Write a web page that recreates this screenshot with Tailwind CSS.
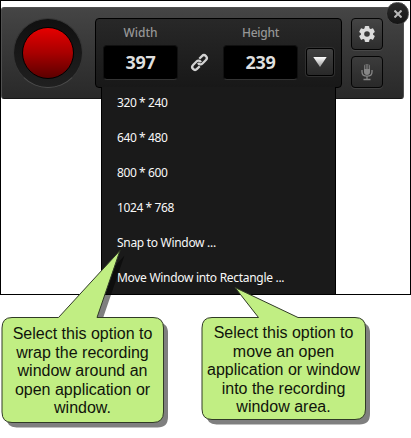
<!DOCTYPE html>
<html lang="en">
<head>
<meta charset="utf-8">
<title>Recorder</title>
<script src="https://cdn.jsdelivr.net/npm/@tailwindcss/browser@4"></script>
</head>
<body class="bg-white">
<main class="relative flex h-[438px] w-[411px] flex-col overflow-hidden font-['Noto_Sans',sans-serif]">
  <section class="relative h-[295px] border border-black pt-[6px]">
    <!-- recorder toolbar -->
    <div class="flex h-[92px] w-[403px] rounded-[3px] border border-[#505050] border-b-[#171717] bg-linear-to-b from-[#454545] to-[#292929] pt-[10px] pl-[11px]">
      <div class="flex size-[70px] shrink-0 items-center justify-center rounded-full border border-[#353535] border-b-[#4c4c4c] bg-linear-to-b from-[#101010] to-[#202020]">
        <div class="size-[52px] rounded-full border border-black bg-linear-to-b from-[#e60000] via-[#a80000] to-[#5c0000]"></div>
      </div>
      <div class="ml-[12px] flex h-[70px] w-[247px] shrink-0 rounded-[4px] border border-black bg-linear-to-b from-[#282828] to-[#181818] pl-[7px]">
        <div class="flex w-[75px] flex-col items-center">
          <span class="mt-[4px] h-[22px] text-[12px] leading-[19px] font-medium text-[#969696]">Width</span>
          <div class="flex h-[35px] w-full items-center justify-center rounded-[4px] border border-[#111] border-b-[#343434] bg-black text-[18px] font-bold tracking-[-0.3px] text-[#dedede]">397</div>
        </div>
        <svg class="mt-[34px] ml-[11px] size-[20px]" viewBox="0 0 20 20" fill="none" stroke="#d2d2d2" stroke-width="2.300">
          <g transform="translate(.5 -.5) rotate(-45 10 10)">
            <path d="M7.500 12.800H3.700a2.800 2.800 0 0 1 0-5.600H8.600a2.800 2.800 0 0 1 2.700 3.600"/>
            <path d="M12.500 7.200h3.800a2.800 2.800 0 0 1 0 5.600H11.400a2.800 2.800 0 0 1-2.700-3.600"/>
          </g>
        </svg>
        <div class="ml-[14px] flex w-[75px] flex-col items-center">
          <span class="mt-[4px] h-[22px] text-[12px] leading-[19px] font-medium tracking-[-0.3px] text-[#969696]">Height</span>
          <div class="flex h-[35px] w-full items-center justify-center rounded-[4px] border border-[#111] border-b-[#343434] bg-black text-[18px] font-bold tracking-[-0.3px] text-[#dedede]">239</div>
        </div>
        <div class="mt-[29px] ml-[8px] flex size-[28px] items-center justify-center rounded-[3px] border border-black bg-linear-to-b from-[#414141] to-[#292929] shadow-[0_0_0_1px_#303030]">
          <svg class="size-[14px]" viewBox="0 0 14 14"><defs><linearGradient id="arrow" x2="0" y2="1"><stop stop-color="#fff"/><stop offset="1" stop-color="#999"/></linearGradient></defs><path d="M.3 2h13.400L7 12z" fill="url(#arrow)"/></svg>
        </div>
      </div>
      <div class="ml-[9px] flex flex-col gap-[6px]">
        <div class="flex size-[32px] items-center justify-center rounded-[4px] border border-[#050505] bg-linear-to-b from-[#454545] to-[#2d2d2d] shadow-[0_1px_0_#484848]">
          <svg class="size-[18px]" viewBox="-9 -9 18 18">
            <g fill="#dcdcdc"><rect x="-2.300" y="-8" width="4.600" height="16" rx="1"/><rect x="-2.300" y="-8" width="4.600" height="16" rx="1" transform="rotate(60)"/><rect x="-2.300" y="-8" width="4.600" height="16" rx="1" transform="rotate(120)"/><circle r="6.200"/></g>
            <circle r="2.800" fill="#393939"/>
          </svg>
        </div>
        <div class="flex size-[32px] items-center justify-center rounded-[4px] border border-[#050505] bg-linear-to-b from-[#3c3c3c] to-[#292929] shadow-[0_1px_0_#404040]">
          <svg class="h-[18px] w-[14px]" viewBox="0 0 14 18" fill="none" stroke="#868686">
            <path d="M4 3q0-1 .8-1.400V6h.9V1h.9v5h.8V1h.9v5h.9V1.600Q10 2 10 3v6a3 3 0 0 1-6 0z" fill="#868686" stroke="none"/>
            <path d="M2 7v2c0 2.800 2 4.200 5 4.200S12 11.800 12 9V7M7 13v3.500M3.500 16.500h7" stroke-width="1.300"/>
          </svg>
        </div>
      </div>
    </div>
    <!-- size presets menu, open over the toolbar -->
    <div class="absolute top-[86px] left-[100px] flex h-[207px] w-[235px] flex-col border-x border-black bg-[#1a1a1a] pl-[15px] text-[12px] text-[#f8f8f8]">
      <div class="h-[35px] leading-[31px] tracking-[-0.4px]">320 * 240</div>
      <div class="h-[35px] leading-[31px] tracking-[-0.4px]">640 * 480</div>
      <div class="h-[35px] leading-[31px] tracking-[-0.4px]">800 * 600</div>
      <div class="h-[35px] leading-[31px] tracking-[-0.4px]">1024 * 768</div>
      <div class="h-[35px] leading-[31px] tracking-[-0.3px]">Snap to Window ...</div>
      <div class="h-[32px] leading-[31px] tracking-[-0.3px]">Move Window into Rectangle ...</div>
    </div>
    <!-- close button on the toolbar corner -->
    <div class="absolute top-[1px] left-[385px] flex size-[23px] items-center justify-center rounded-full border border-[#484848] bg-linear-to-b from-[#2b2b2b] to-[#151515]">
      <svg class="size-[8px]" viewBox="0 0 8 8" stroke="#b8b8b8" stroke-width="2"><path d="M.5.5l7 7M7.500.5l-7 7"/></svg>
    </div>
  </section>
  <!-- speech balloons -->
  <svg class="absolute inset-0 h-[438px] w-[411px]" viewBox="0 0 411 438">
    <defs>
      <path id="left-balloon" d="M12 317.500H58.500L120 250.500 97 317.500H153Q163.500 317.500 163.500 328V412Q163.500 422.500 153 422.500H12Q2 422.500 2 412V328Q2 317.500 12 317.500Z"/>
      <path id="right-balloon" d="M212 317.500H258.500L235 287.500 298 317.500H355Q365.500 317.500 365.500 328V409Q365.500 419.500 355 419.500H212Q202 419.500 202 409V328Q202 317.500 212 317.500Z"/>
    </defs>
    <g fill="#000" fill-opacity=".5"><use href="#left-balloon" x="4.500" y="5"/><use href="#right-balloon" x="4.500" y="5"/></g>
    <g fill="#c1ee83" stroke="#303a26"><use href="#left-balloon"/><use href="#right-balloon"/></g>
  </svg>
  <div class="relative mt-[30px] flex gap-[38px] pl-[2px] text-center font-['Liberation_Sans',sans-serif] text-[16px] leading-[18.5px] whitespace-nowrap text-[#10140b]">
    <p class="w-[161px]">Select this option to<br>wrap the recording<br>window around an<br>open application or<br>window.</p>
    <p class="-mt-px w-[165px]">Select this option to<br>move an open<br>application or window<br>into the recording<br>window area.</p>
  </div>
</main>
</body>
</html>
